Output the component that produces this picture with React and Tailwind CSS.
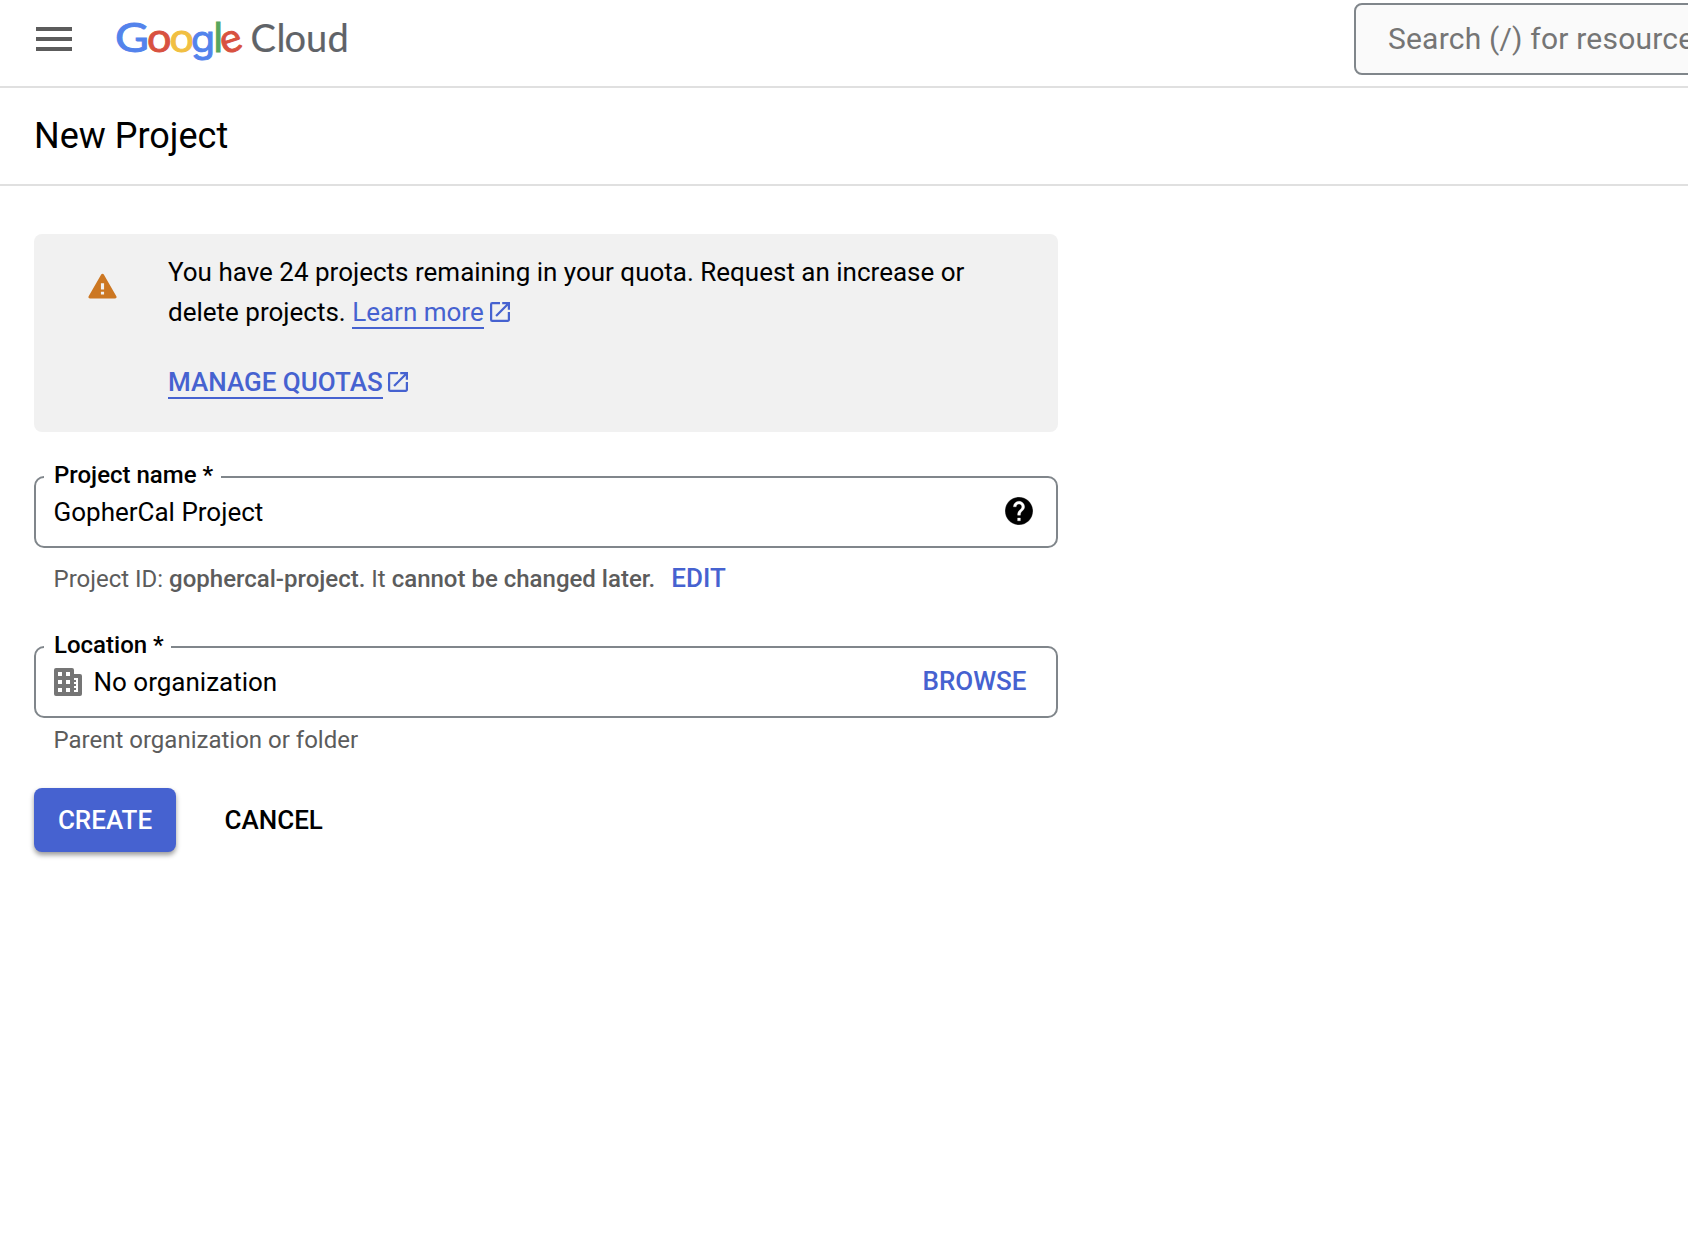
import React from "react";

function OpenInNew({ className }) {
  return (
    <svg viewBox="3 3 18 18" fill="currentColor" className={className}>
      <path d="M19 19H5V5h7V3H5a2 2 0 0 0-2 2v14a2 2 0 0 0 2 2h14c1.1 0 2-.9 2-2v-7h-2v7zM14 3v2h3.59l-9.83 9.83 1.41 1.41L19 6.41V10h2V3h-7z" />
    </svg>
  );
}

function Logo() {
  return (
    <svg
      viewBox="104 6 256 74"
      className="ml-8 h-[74px] w-[256px] shrink-0 overflow-visible"
      fontFamily="Lato, sans-serif"
      aria-label="Google Cloud"
    >
      <g fontSize="40" strokeWidth="0.9">
        <text x="115" y="51.800" fontSize="41" textLength="34" lengthAdjust="spacingAndGlyphs" fill="#5383ec" stroke="#5383ec">G</text>
        <text x="147" y="51.800" textLength="24.500" lengthAdjust="spacingAndGlyphs" fill="#d85140" stroke="#d85140">o</text>
        <text x="169.500" y="51.800" textLength="24.500" lengthAdjust="spacingAndGlyphs" fill="#f1bf42" stroke="#f1bf42">o</text>
        <text x="191" y="51.800" fontFamily="Inter, sans-serif" fontSize="37" textLength="24" lengthAdjust="spacingAndGlyphs" fill="#5383ec" stroke="#5383ec">g</text>
        <text x="213.500" y="51.800" fill="#58a65c" stroke="#58a65c">l</text>
        <text x="220.500" y="51.800" textLength="21.500" lengthAdjust="spacingAndGlyphs" transform="rotate(-18 231.5 42)" fill="#d85140" stroke="#d85140">e</text>
      </g>
      <text y="52" x="250.500 276.500 284.500 306 327.500" fontSize="38" fill="#5f6368" stroke="#5f6368" strokeWidth="0.2">Cloud</text>
    </svg>
  );
}

function Field({ label, children }) {
  return (
    <div className="relative flex h-[72px] items-center rounded-[10px] border-2 border-[#80868b] pl-[18px] text-[26px]">
      <span className="absolute -top-[18px] left-2 bg-white pr-[7.5px] pl-[10px] text-[24px] leading-[30px] font-medium whitespace-nowrap">
        {label}
      </span>
      {children}
    </div>
  );
}

export default function App() {
  return (
    <div className="h-[1246px] w-full overflow-hidden bg-white font-['Roboto',sans-serif] text-black">
      <header className="flex h-[88px] items-start border-b-2 border-[#e0e0e0]">
        <button className="mt-[27px] ml-9 flex w-9 shrink-0 flex-col gap-[6px]" aria-label="Navigation menu">
          <span className="h-1 bg-[#5c5c5c]" />
          <span className="h-1 bg-[#5c5c5c]" />
          <span className="h-1 bg-[#5c5c5c]" />
        </button>
        <div className="mt-[6px] flex">
          <Logo />
        </div>
        <div className="mt-[3px] -mr-3 ml-auto flex h-[72px] w-[346px] items-center overflow-hidden rounded-lg border-2 border-[#80868b] bg-[#fafafa] pb-[2px] pl-8 text-[30px] tracking-[0.2px] whitespace-nowrap text-[#757575]">
          Search (/) for resources
        </div>
      </header>

      <div className="flex h-[98px] items-center border-b-2 border-[#e0e0e0] pl-[34px]">
        <h1 className="text-[36px] leading-[48px]">New Project</h1>
      </div>

      <main className="mt-12 ml-[34px] w-[1024px]">
        <section className="flex h-[198px] rounded-lg bg-[#f1f1f1] pt-[18px]">
          <svg viewBox="1 2 22 19" className="mt-[21px] ml-[54px] h-[26px] w-[29px] shrink-0" fill="#cc7722">
            <path d="M2.600 21h18.800c1.100 0 1.600-.8 1.100-1.700L13 2.800c-.5-.9-1.500-.9-2 0L1.500 19.300C1 20.200 1.500 21 2.600 21zM13.200 18h-2.400v-2.200h2.400V18zm0-3.800h-2.400V9.500h2.400v4.700z" />
          </svg>
          <div className="ml-[51px] text-[26px] leading-[40px] whitespace-nowrap">
            <p>
              You have 24 projects remaining in your quota. Request an increase or
              <br />
              delete projects.{" "}
              <a className="border-b-2 border-[#4662d0] text-[#4662d0]">Learn more</a>
              <OpenInNew className="ml-[6px] inline-block size-5 align-[-1px] text-[#4662d0]" />
            </p>
            <p className="mt-[30px] font-medium text-[#4662d0]">
              <a className="border-b-2 border-[#4662d0]">MANAGE QUOTAS</a>
              <OpenInNew className="ml-[5px] inline-block size-5 align-[-1px]" />
            </p>
          </div>
        </section>

        <div className="mt-11">
          <Field label="Project name *">
            <span className="-ml-[0.5px]">GopherCal Project</span>
            <svg viewBox="2 2 20 20" className="mr-[23px] mb-[2px] ml-auto size-7">
              <path d="M12 2C6.480 2 2 6.480 2 12s4.480 10 10 10 10-4.480 10-10S17.520 2 12 2zm1 17h-2v-2h2v2zm2.070-7.750-.9.920C13.450 12.900 13 13.500 13 15h-2v-.5c0-1.100.450-2.100 1.170-2.830l1.240-1.260c.370-.360.590-.860.590-1.410 0-1.100-.9-2-2-2s-2 .9-2 2H8c0-2.210 1.790-4 4-4s4 1.790 4 4c0 .880-.360 1.680-.930 2.250z" stroke="#fff" strokeWidth="0.2" />
            </svg>
          </Field>
        </div>

        <div className="mt-[11px] flex h-10 items-center pl-[19.5px] text-[24px] whitespace-nowrap text-[#5c5c5c]">
          <p>
            Project ID: <span className="font-medium">gophercal-project.</span> It{" "}
            <span className="font-medium">cannot be changed later.</span>
          </p>
          <a className="mb-[2px] ml-4 text-[26px] font-medium text-[#4662d0]">EDIT</a>
        </div>

        <div className="mt-[47px]">
          <Field label="Location *">
            <svg viewBox="0 0 28 28" className="size-7" fill="#757575">
              <path
                fillRule="evenodd"
                d="M2 0H18a2 2 0 0 1 2 2V6h6a2 2 0 0 1 2 2V26a2 2 0 0 1-2 2H2a2 2 0 0 1-2-2V2a2 2 0 0 1 2-2zM4 4v4h4V4zM12 4v4h4V4zM4 12v4h4v-4zM12 12v4h4v-4zM4 20v4h4v-4zM12 20v4h4v-4zM20 10v2h2v2h-2v2h2v2h-2v2h2v2h-2v2h4V10z"
              />
            </svg>
            <span className="ml-[11.5px]">No organization</span>
            <a className="mr-[29.5px] mb-[2px] ml-auto font-medium text-[#4662d0]">BROWSE</a>
          </Field>
        </div>
        <p className="mt-2 pl-[19.5px] text-[24px] leading-7 text-[#5c5c5c]">Parent organization or folder</p>

        <div className="mt-[34px] flex h-16 items-center text-[26px] font-medium">
          <button className="h-16 w-[142px] rounded-lg bg-[#4662d0] text-white shadow-[0_3px_5px_rgba(0,0,0,0.4)]">
            CREATE
          </button>
          <button className="ml-[48.5px]">CANCEL</button>
        </div>
      </main>
    </div>
  );
}
